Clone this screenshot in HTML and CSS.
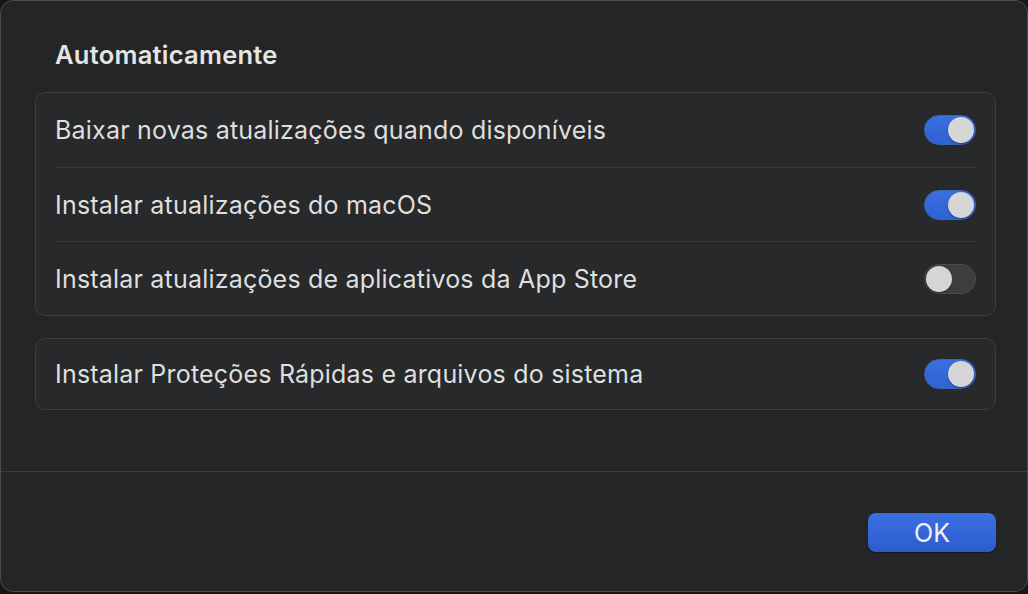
FILE: index.html
```html
<!DOCTYPE html>
<html lang="pt-BR">
<head>
    <meta charset="UTF-8">
    <meta name="viewport" content="width=device-width, initial-scale=1.0">
    <title>Atualizações Automáticas</title>
    <link rel="stylesheet" href="styles.css">
</head>
<body>
    <div class="window">
        <div class="main">
            <h2 class="title">Automaticamente</h2>

            <div class="card">
                <div class="row">
                    <span class="label">Baixar novas atualizações quando disponíveis</span>
                    <span class="toggle on"><span class="knob"></span></span>
                </div>
                <div class="row">
                    <span class="label">Instalar atualizações do macOS</span>
                    <span class="toggle on"><span class="knob"></span></span>
                </div>
                <div class="row">
                    <span class="label">Instalar atualizações de aplicativos da App Store</span>
                    <span class="toggle"><span class="knob"></span></span>
                </div>
            </div>

            <div class="card single">
                <div class="row">
                    <span class="label">Instalar Proteções Rápidas e arquivos do sistema</span>
                    <span class="toggle on"><span class="knob"></span></span>
                </div>
            </div>
        </div>

        <div class="footer">
            <button class="button ok">OK</button>
        </div>
    </div>
</body>
</html>
```

FILE: styles.css
```css
body {
    margin: 0;
    background-color: #161717;
    font-family: Inter, "Noto Sans", sans-serif;
    color: #dfdfdf;
}
.window {
    box-sizing: border-box;
    width: 1028px;
    height: 592px;
    background-color: #232526;
    border: 1px solid #4a4c4d;
    border-radius: 13px;
    display: flex;
    flex-direction: column;
    overflow: hidden;
}
.main {
    height: 471px;
    box-sizing: border-box;
    padding: 39px 31px 0 34px;
    border-bottom: 1px solid #393b3c;
}
.title {
    margin: 0 0 22px 0;
    padding-left: 20px;
    font-size: 25.5px;
    line-height: 30px;
    font-weight: 600;
    letter-spacing: 0.25px;
    color: #e4e4e4;
}
.card {
    background-color: #28292a;
    border: 1px solid #3b3d3e;
    border-radius: 10px;
}
.card.single {
    margin-top: 22px;
}
.row {
    box-sizing: border-box;
    height: 74px;
    margin: 0 19px;
    display: flex;
    align-items: center;
    justify-content: space-between;
}
.row + .row {
    border-top: 1px solid #393a3b;
}
.card.single .row {
    height: 70px;
}
.label {
    font-size: 25px;
    letter-spacing: 0.2px;
}
.toggle {
    box-sizing: border-box;
    width: 52px;
    height: 30px;
    border-radius: 15px;
    background-color: #3b3d3e;
    border: 1px solid #4a4c4d;
    display: flex;
    align-items: center;
    padding: 0 1px;
}
.toggle.on {
    background: linear-gradient(#3a6fe0, #2f62d4);
    border-color: #3d64b8;
    justify-content: flex-end;
}
.knob {
    width: 26px;
    height: 26px;
    border-radius: 50%;
    background-color: #d6d6d6;
    box-shadow: 0 1px 2px rgba(0, 0, 0, 0.35);
}
.footer {
    flex: 1;
    display: flex;
    justify-content: flex-end;
    padding: 41px 31px 0 0;
}
.button {
    font-family: Inter, "Noto Sans", sans-serif;
    font-size: 25px;
    border: none;
    cursor: pointer;
}
.button.ok {
    width: 128px;
    height: 39px;
    border-radius: 8px;
    color: #f2f2f2;
    background: linear-gradient(#3a6fe2, #2d5ccc);
    box-shadow: 0 1px 1px rgba(0, 0, 0, 0.4);
}
```
